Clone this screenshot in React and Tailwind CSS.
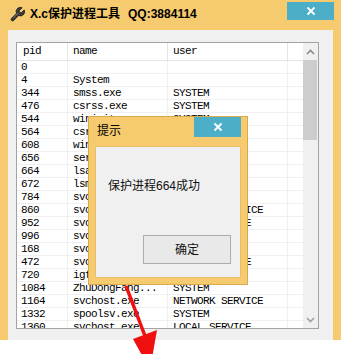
import React from "react";

const rows = [
  ["0", "", ""],
  ["4", "System", ""],
  ["344", "smss.exe", "SYSTEM"],
  ["476", "csrss.exe", "SYSTEM"],
  ["544", "wininit.exe", "SYSTEM"],
  ["564", "csrss.exe", "SYSTEM"],
  ["608", "winlogon.exe", "SYSTEM"],
  ["656", "services.exe", "SYSTEM"],
  ["664", "lsass.exe", "SYSTEM"],
  ["672", "lsm.exe", "SYSTEM"],
  ["784", "svchost.exe", "SYSTEM"],
  ["860", "svchost.exe", "NETWORK SERVICE"],
  ["952", "svchost.exe", "LOCAL SERVICE"],
  ["996", "svchost.exe", "SYSTEM"],
  ["168", "svchost.exe", "SYSTEM"],
  ["472", "svchost.exe", "LOCAL SERVICE"],
  ["720", "igfxCUIService.exe", "SYSTEM"],
  ["1084", "ZhuDongFang...", "SYSTEM"],
  ["1164", "svchost.exe", "NETWORK SERVICE"],
  ["1332", "spoolsv.exe", "SYSTEM"],
  ["1360", "svchost.exe", "LOCAL SERVICE"],
];

const mono = { fontFamily: '"Liberation Mono", "DejaVu Sans Mono", monospace' };
const ui = { fontFamily: '"Liberation Sans", "Noto Sans CJK SC", sans-serif' };

function CloseX() {
  return (
    <svg width="10" height="10" viewBox="0 0 10 10">
      <path d="M1.5 1.5 L8.5 8.5 M8.5 1.5 L1.5 8.5" stroke="#fff" strokeWidth="1.8" />
    </svg>
  );
}

function Wrench() {
  return (
    <svg width="17" height="17" viewBox="0 0 24 24">
      <path
        d="M14.7 6.3a1 1 0 0 0 0 1.4l1.6 1.6a1 1 0 0 0 1.4 0l3.77-3.77a6 6 0 0 1-7.94 7.94l-6.91 6.91a2.12 2.12 0 0 1-3-3l6.91-6.91a6 6 0 0 1 7.940-7.94l-3.76 3.76z"
        fill="#3a3a3a"
        stroke="#1e1e1e"
        strokeWidth="1.2"
        strokeLinejoin="round"
      />
      <path d="M13.5 9.5 L6 17" stroke="#9a9a9a" strokeWidth="1" />
    </svg>
  );
}

export default function App() {
  return (
    <div className="relative w-[341px] h-[354px] bg-white overflow-hidden" style={ui}>
      {/* main window */}
      <div className="flex flex-col h-[340px] bg-[#f6ca6e]">
        <div className="flex h-[30px] shrink-0 items-start">
          <div className="ml-[9px] mt-[6px]">
            <Wrench />
          </div>
          <div className="ml-[4px] mt-[7px] text-[12px] leading-[15px] font-bold text-black whitespace-nowrap">
            X.c保护进程工具<span className="ml-[8px]">QQ:3884114</span>
          </div>
          <div className="ml-auto mr-[7px] mt-[2px] w-[47px] h-[18px] bg-[#4daec8] flex items-center justify-center">
            <CloseX />
          </div>
        </div>
        <div className="mx-[8px] h-[310px] shrink-0 overflow-hidden bg-[#f0f0f0] pt-[12px] pl-[8px] pr-[14px] pb-[11px]">
          <div className="h-[287px] border border-[#a3a3a3] bg-white flex overflow-hidden">
            <div className="flex-1 h-full flex flex-col overflow-hidden text-[11px] tracking-[-0.6px] text-black" style={mono}>
              <div className="flex h-[18px] shrink-0 border-b border-[#e5e5e5] items-center">
                <div className="w-[51px] h-full border-r border-[#e5e5e5] pl-[6px] flex items-center">pid</div>
                <div className="w-[100px] h-full border-r border-[#e5e5e5] pl-[5px] flex items-center">name</div>
                <div className="w-[120px] h-full border-r border-[#e5e5e5] pl-[5px] flex items-center">user</div>
                <div className="flex-1 h-full" />
              </div>
              {rows.map((r, i) => (
                <div key={i} className="flex h-[13px] shrink-0 border-b border-[#f0f0f0] leading-[13px]">
                  <div className="w-[51px] h-full border-r border-[#f0f0f0] pl-[4px] whitespace-nowrap overflow-hidden">{r[0]}</div>
                  <div className="w-[100px] h-full border-r border-[#f0f0f0] pl-[5px] whitespace-nowrap overflow-hidden">{r[1]}</div>
                  <div className="w-[120px] h-full border-r border-[#f0f0f0] pl-[5px] whitespace-nowrap overflow-hidden">{r[2]}</div>
                  <div className="flex-1 h-full" />
                </div>
              ))}
            </div>
            {/* scrollbar */}
            <div className="w-[15px] h-full shrink-0 bg-[#f0f0f0] flex flex-col">
              <div className="h-[17px] shrink-0 flex items-center justify-center">
                <svg width="9" height="6" viewBox="0 0 9 6">
                  <path d="M1 5 L4.5 1.5 L8 5" stroke="#8a8a8a" strokeWidth="1.6" fill="none" />
                </svg>
              </div>
              <div className="h-[80px] shrink-0 mr-[1px] bg-[#cdcdcd]" />
              <div className="flex-1" />
              <div className="h-[17px] shrink-0 flex items-center justify-center">
                <svg width="9" height="6" viewBox="0 0 9 6">
                  <path d="M1 1 L4.5 4.5 L8 1" stroke="#a0a0a0" strokeWidth="1.6" fill="none" />
                </svg>
              </div>
            </div>
          </div>
        </div>
      </div>

      {/* dialog */}
      <div className="absolute left-[88px] top-[116px] w-[160px] h-[169px] border border-[#d9a94a] bg-[#f6ca6e] flex flex-col">
        <div className="relative h-[29px] shrink-0">
          <div className="absolute left-[8px] top-[7px] text-[12px] leading-[15px] text-black">提示</div>
          <div className="absolute right-[6px] top-0 w-[47px] h-[20px] bg-[#4daec8] flex items-center justify-center">
            <CloseX />
          </div>
        </div>
        <div className="mx-[6px] mb-[6px] flex-1 bg-[#f0f0f0] border border-[#e8be68] flex flex-col">
          <div className="pl-[12px] mt-[31px] text-[12px] leading-[16px] text-[#111]">保护进程664成功</div>
          <div className="mt-auto self-end mr-[9px] mb-[13px] w-[88px] h-[29px] border border-[#adadad] bg-[#e9e9e9] flex items-center justify-center text-[12px] text-[#111]">
            确定
          </div>
        </div>
      </div>

      {/* red arrow */}
      <svg className="absolute left-0 top-0 pointer-events-none" width="341" height="354" viewBox="0 0 341 354">
        <line x1="126" y1="286" x2="145" y2="336" stroke="#f01010" strokeWidth="3.5" />
        <polygon points="133,339 157,330 150,370" fill="#f01010" />
      </svg>
    </div>
  );
}
